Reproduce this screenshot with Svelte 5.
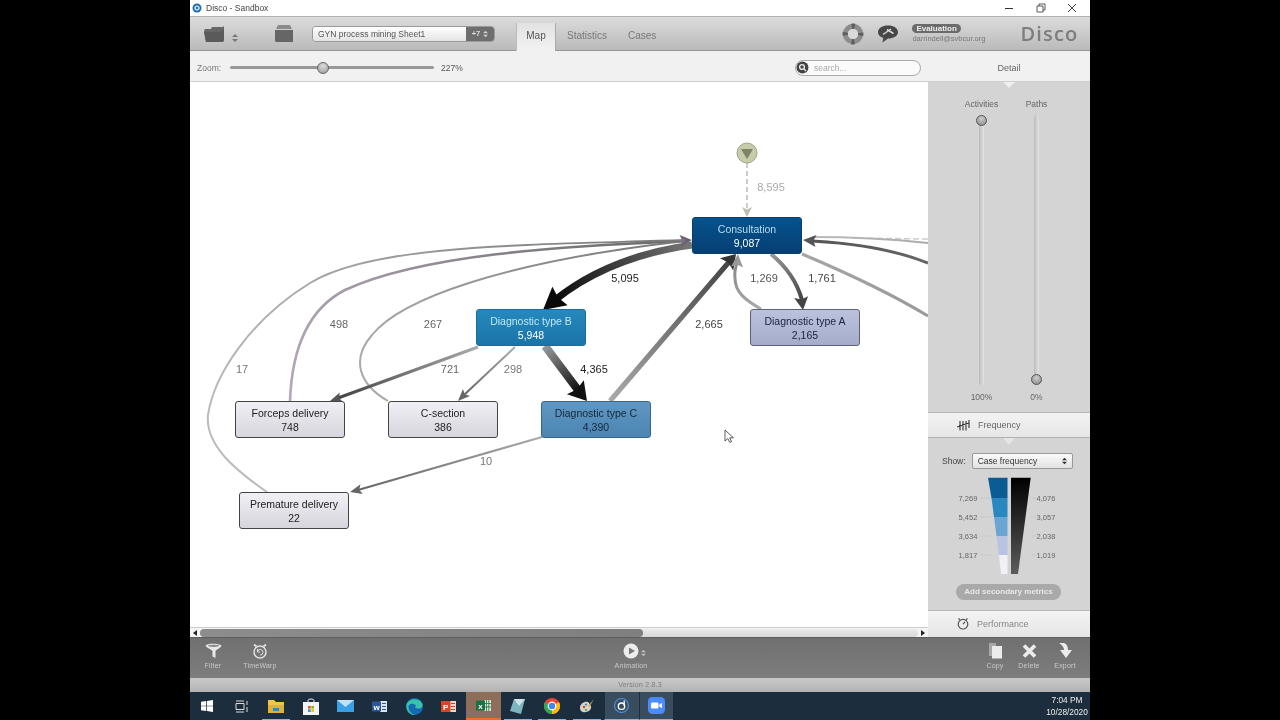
<script>
  const nodes = [
    { name: 'Consultation', count: '9,087', x: 692, y: 217, kind: 'n1' },
    { name: 'Diagnostic type B', count: '5,948', x: 476, y: 309, kind: 'n2' },
    { name: 'Diagnostic type A', count: '2,165', x: 750, y: 309, kind: 'n4' },
    { name: 'Diagnostic type C', count: '4,390', x: 541, y: 401, kind: 'n3' },
    { name: 'Forceps delivery', count: '748', x: 235, y: 401, kind: 'n5' },
    { name: 'C-section', count: '386', x: 388, y: 401, kind: 'n5' },
    { name: 'Premature delivery', count: '22', x: 239, y: 492, kind: 'n5' }
  ];

  // a = colour at source, b = colour at target, back = point the arrow head points away from
  const edges = [
    { d: 'M928 239 L853 238', w: 1.5, a: '#ccc', b: '#ccc', dash: '6 3' },
    { d: 'M928 243 C890 239 850 237 812 237', w: 2, a: '#aaa', b: '#bbb' },
    { d: 'M928 263 C890 248 850 243 812 241', w: 3, a: '#666', b: '#555', tip: [803, 240], back: [815, 241], hs: 13, hw: 6 },
    { d: 'M802 254 C840 270 885 290 928 316', w: 3, a: '#a5a5a5', b: '#999' },
    { d: 'M692 245 C635 253 590 272 555 300', w: 7, a: '#777', b: '#0a0a0a', tip: [543, 310], back: [560, 296], hs: 22, hw: 12, hc: '#0a0a0a' },
    { d: 'M545 346 L578 390', w: 8, a: '#999', b: '#111', tip: [587, 401], back: [576, 388], hs: 18, hw: 11, hc: '#111' },
    { d: 'M610 401 L729 262', w: 5, a: '#aaa', b: '#444', tip: [736, 254], back: [726, 265], hs: 14, hw: 9, hc: '#333' },
    { d: 'M761 309 C745 300 735 292 735 278 C734 270 736 266 738 260', w: 3, a: '#aaa', b: '#888', tip: [738, 254], back: [737, 268], hs: 13, hw: 6, hc: '#999' },
    { d: 'M771 254 C788 268 797 282 802 300', w: 4, a: '#999', b: '#444', tip: [803, 310], back: [801, 296], hs: 13, hw: 7, hc: '#444' },
    { d: 'M290 401 C292 345 310 308 345 290 C420 255 560 246 685 241', w: 2.6, a: '#b3a8b8', b: '#666', tip: [692, 240], back: [680, 241], hs: 12, hw: 6, hc: '#6d5f74' },
    { d: 'M388 401 C360 385 350 360 372 335 C400 300 500 262 685 241', w: 2, a: '#aaa', b: '#777' },
    { d: 'M267 492 C235 470 205 445 208 415 C214 375 250 320 310 283 C375 243 540 245 685 240', w: 2, a: '#bbb', b: '#777' },
    { d: 'M478 347 L338 398', w: 3, a: '#aaa', b: '#444', tip: [330, 401], back: [342, 397], hs: 12, hw: 5, hc: '#555' },
    { d: 'M515 347 L464 395', w: 2, a: '#aaa', b: '#666', tip: [458, 401], back: [467, 392], hs: 12, hw: 5, hc: '#666' },
    { d: 'M542 437 L358 490', w: 2, a: '#aaa', b: '#666', tip: [350, 492], back: [362, 489], hs: 12, hw: 5, hc: '#666' },
    { d: 'M747 163 L747 208', w: 1.5, a: '#bbb', b: '#bbb', dash: '5 3', tip: [747, 217], back: [747, 208], hs: 10, hw: 5, hc: '#bdbfae' }
  ];

  const labels = [
    { t: '8,595', x: 771, y: 187, c: '#aaa' },
    { t: '5,095', x: 625, y: 278, c: '#222' },
    { t: '1,269', x: 764, y: 278, c: '#555' },
    { t: '1,761', x: 822, y: 278, c: '#444' },
    { t: '2,665', x: 709, y: 324, c: '#444' },
    { t: '498', x: 339, y: 324, c: '#666' },
    { t: '267', x: 433, y: 324, c: '#666' },
    { t: '721', x: 450, y: 369, c: '#666' },
    { t: '298', x: 513, y: 369, c: '#777' },
    { t: '4,365', x: 594, y: 369, c: '#222' },
    { t: '17', x: 242, y: 369, c: '#777' },
    { t: '10', x: 486, y: 461, c: '#777' }
  ];

  function head(e) {
    const dx = e.tip[0] - e.back[0];
    const dy = e.tip[1] - e.back[1];
    const l = Math.hypot(dx, dy);
    const ux = dx / l;
    const uy = dy / l;
    const bx = e.tip[0] - ux * e.hs;
    const by = e.tip[1] - uy * e.hs;
    return [
      `${e.tip[0]},${e.tip[1]}`,
      `${bx - uy * e.hw},${by + ux * e.hw}`,
      `${bx + ux * 2.5},${by + uy * 2.5}`,
      `${bx + uy * e.hw},${by - ux * e.hw}`
    ].join(' ');
  }

  function ends(e) {
    const n = e.d.match(/-?\d+(\.\d+)?/g).map(Number);
    return { x1: n[0], y1: n[1], x2: n[n.length - 2], y2: n[n.length - 1] };
  }

  const legendLeft = [['7,269', 128], ['5,452', 147], ['3,634', 166], ['1,817', 185]];
  const legendRight = [['4,076', 128], ['3,057', 147], ['2,038', 166], ['1,019', 185]];
</script>

<div class="screen">
  <div class="titlebar">
    <svg class="appicon" width="10" height="10" viewBox="0 0 10 10">
      <circle cx="5" cy="5" r="4.5" fill="#1f6fb5" />
      <circle cx="5" cy="5" r="2" fill="none" stroke="#fff" stroke-width="1.2" />
    </svg>
    <span class="apptitle">Disco - Sandbox</span>
    <div class="winbtns">
      <svg width="10" height="10" viewBox="0 0 10 10"><path d="M0 5.5H8" stroke="#333" /></svg>
      <svg width="10" height="10" viewBox="0 0 10 10" fill="none" stroke="#333" stroke-width="0.8"><path d="M1 3H7V9H1Z M3 3V1H9V7H7" /></svg>
      <svg width="10" height="10" viewBox="0 0 10 10" fill="none" stroke="#333" stroke-width="0.9"><path d="M1 1L9 9M9 1L1 9" /></svg>
    </div>
  </div>

  <div class="toolbar">
    <svg class="folder" width="21" height="18" viewBox="0 0 21 18">
      <path d="M1 4H7L8 2H19L20 1V15L19 17H2L0 6Z" fill="#666" />
      <path d="M0 7H16L20 4V15L19 17H2Z" fill="#5a5a5a" />
    </svg>
    <svg class="updown" width="6" height="8" viewBox="0 0 6 8"><path d="M3 0L6 3H0ZM3 8L0 5H6Z" fill="#777" /></svg>
    <svg class="archive" width="18" height="18" viewBox="0 0 18 18">
      <path d="M3 0H15L17 4H1Z" fill="#8a8a8a" />
      <path d="M0 5H18V17H1L0 16Z" fill="#666" />
    </svg>
    <div class="dataset">
      <span class="dataset-name">GYN process mining Sheet1</span>
      <span class="dataset-more">+7
        <svg width="5" height="8" viewBox="0 0 6 8"><path d="M3 0L6 3H0ZM3 8L0 5H6Z" fill="#ccc" /></svg>
      </span>
    </div>
    <div class="tabs">
      <span class="tab active">Map</span>
      <span class="tab stat">Statistics</span>
      <span class="tab cases">Cases</span>
    </div>
    <svg class="buoy" width="22" height="22" viewBox="0 0 22 22">
      <circle cx="11" cy="11" r="7.7" fill="none" stroke="#8c8c8c" stroke-width="5" />
      <circle cx="11" cy="11" r="7.7" fill="none" stroke="#5e5e5e" stroke-width="5.4" stroke-dasharray="3 9.1" stroke-dashoffset="1.5" />
      <circle cx="11" cy="11" r="5" fill="#dadada" />
    </svg>
    <svg class="chat" width="20" height="18" viewBox="0 0 20 18">
      <path d="M10 0.5C15.5 0.5 20 3 20 7.2C20 11 15.5 13.5 10 13.5L4.5 17.5L5.2 12.8C2 11.8 0 9.8 0 7.2C0 3 4.5 0.5 10 0.5Z" fill="#474747" />
      <path d="M5 9.5L13 4M9 4.5L15.5 8.5" stroke="#d8d8d8" stroke-width="1.5" fill="none" />
    </svg>
    <div class="account">
      <span class="badge">Evaluation</span>
      <span class="mail">darrindell@svbcur.org</span>
    </div>
    <span class="logo">Disco</span>
  </div>

  <div class="subbar">
    <span class="zoomlabel">Zoom:</span>
    <div class="zoomtrack"><span class="zoomknob"></span></div>
    <span class="zoomvalue">227%</span>
    <div class="search">
      <svg width="13" height="13" viewBox="0 0 13 13">
        <circle cx="6.5" cy="6.5" r="6" fill="#444" />
        <circle cx="6" cy="6" r="2.4" fill="none" stroke="#eee" stroke-width="1.3" />
        <path d="M8 8L10 10" stroke="#eee" stroke-width="1.3" />
      </svg>
      <span>search...</span>
    </div>
    <div class="detailtab">Detail</div>
  </div>

  <div class="main">
    <div class="canvas">
      <svg class="edges" width="738" height="545" viewBox="190 82 738 545">
        <defs>
          {#each edges as e, i}
            {@const p = ends(e)}
            <linearGradient id="edge{i}" gradientUnits="userSpaceOnUse" x1={p.x1} y1={p.y1} x2={p.x2} y2={p.y2 + 0.01}>
              <stop offset="0" stop-color={e.a} />
              <stop offset="1" stop-color={e.b} />
            </linearGradient>
          {/each}
        </defs>
        {#each edges as e, i}
          <path d={e.d} fill="none" stroke="url(#edge{i})" stroke-width={e.w} stroke-dasharray={e.dash} />
          {#if e.tip}
            <polygon points={head(e)} fill={e.hc || e.b} />
          {/if}
        {/each}
        <circle cx="747" cy="153" r="10" fill="#c6cbaa" stroke="#a2a58f" />
        <path d="M741 149H753L747 159Z" fill="#7d8367" />
      </svg>

      {#each labels as l}
        <span class="edgelabel" style="left:{l.x - 190}px;top:{l.y - 82}px;color:{l.c}">{l.t}</span>
      {/each}

      {#each nodes as n}
        <div class="node {n.kind}" style="left:{n.x - 190}px;top:{n.y - 82}px">
          <span class="node-name">{n.name}</span>
          <span class="node-count">{n.count}</span>
        </div>
      {/each}

      <svg class="cursor" width="11" height="15" viewBox="0 0 11 15">
        <path d="M1 1V12L3.8 9.5L5.8 13.5L7.6 12.6L5.7 8.8H9.4Z" fill="#fff" stroke="#333" stroke-width="0.8" />
      </svg>

      <div class="scrollbar">
        <span class="arrow-l"></span>
        <div class="scrolltrack"><div class="scrollthumb"></div></div>
        <span class="arrow-r"></span>
      </div>
    </div>

    <aside class="side">
      <div class="sliders">
        <div class="slidercol">
          <span class="slabel">Activities</span>
          <div class="vtrack"><span class="vknob top"></span></div>
          <span class="slabel pct">100%</span>
        </div>
        <div class="slidercol">
          <span class="slabel">Paths</span>
          <div class="vtrack"><span class="vknob bottom"></span></div>
          <span class="slabel pct">0%</span>
        </div>
      </div>

      <div class="band freq">
        <svg width="13" height="11" viewBox="0 0 13 11" stroke="#333" stroke-width="1.1" fill="none">
          <path d="M3 1V10.5M6 1V10.5M9 1V10.5M12 0V8M0 7L12 3" />
        </svg>
        <span>Frequency</span>
      </div>
      <div class="freqbody">
        <div class="showrow">
          <span>Show:</span>
          <div class="select">
            <span>Case frequency</span>
            <svg width="5" height="8" viewBox="0 0 6 8"><path d="M3 0L6 3H0ZM3 8L0 5H6Z" fill="#333" /></svg>
          </div>
        </div>
        <svg class="legend" width="162" height="104" viewBox="0 100 162 104">
          <defs>
            <linearGradient id="blackfun" x1="0" y1="0" x2="0" y2="1">
              <stop offset="0" stop-color="#000" />
              <stop offset="1" stop-color="#5c5c5c" />
            </linearGradient>
          </defs>
          <g stroke="#c0c0c0" stroke-width="0.6">
            {#each legendLeft as row}
              <line x1="52" x2="64" y1={row[1]} y2={row[1]} />
            {/each}
            {#each legendRight as row}
              <line x1="103" x2="108" y1={row[1]} y2={row[1]} />
            {/each}
          </g>
          <polygon points="60,107.7 79.5,107.7 79.5,128 63.5,128" fill="#0b5b95" />
          <polygon points="63.5,128 79.5,128 79.5,147 66,147" fill="#2a88c0" />
          <polygon points="66,147 79.5,147 79.5,166 68.5,166" fill="#6ba5d3" />
          <polygon points="68.5,166 79.5,166 79.5,185 71,185" fill="#b9c3e3" />
          <polygon points="71,185 79.5,185 79.5,204 73,204" fill="#f1f1f5" />
          <polygon points="83,107.7 102.7,107.7 90,204 83,204" fill="url(#blackfun)" />
          {#each legendLeft as row}
            <text class="tick" x="40" y={row[1] + 3} text-anchor="middle">{row[0]}</text>
          {/each}
          {#each legendRight as row}
            <text class="tick" x="118" y={row[1] + 3} text-anchor="middle">{row[0]}</text>
          {/each}
        </svg>
        <div class="addmetrics">Add secondary metrics</div>
      </div>
      <div class="band perf">
        <svg width="12" height="13" viewBox="0 0 12 13" fill="none" stroke="#555" stroke-width="1.2">
          <circle cx="6" cy="7.2" r="4.8" />
          <path d="M6 7.2L8 5M1.5 1.5L3 2.8M10.5 1.5L9 2.8" />
        </svg>
        <span>Performance</span>
      </div>
    </aside>
  </div>

  <div class="bottombar">
    <div class="tool filter">
      <svg width="17" height="16" viewBox="0 0 17 16">
        <path d="M0.5 2.5C2 0.5 13 0 16.5 2.5C16 5 12 6 10.5 8V15L7.5 13.5V8C6 6 1.5 5 0.5 2.5Z" fill="#e8e8e8" />
        <ellipse cx="8.5" cy="2.8" rx="5.5" ry="1.1" fill="#8a8a8a" />
      </svg>
      <span>Filter</span>
    </div>
    <div class="tool warp">
      <svg width="16" height="16" viewBox="0 0 16 16" fill="none" stroke="#e0e0e0" stroke-width="1.5">
        <circle cx="8" cy="9" r="6" />
        <path d="M5.5 8.5A2.8 2.8 0 1 1 8 12M5.5 6V9H8" stroke-width="1" />
        <path d="M2 1.5L4.5 3.5M14 1.5L11.5 3.5" stroke-width="1.8" />
      </svg>
      <span>TimeWarp</span>
    </div>
    <div class="tool anim">
      <div class="animicon">
        <svg width="16" height="16" viewBox="0 0 16 16">
          <circle cx="8" cy="8" r="7.5" fill="#ececec" />
          <path d="M6 4.5L12 8L6 11.5Z" fill="#777" />
        </svg>
        <svg class="animarrows" width="5" height="8" viewBox="0 0 6 8"><path d="M3 0L6 3H0ZM3 8L0 5H6Z" fill="#bbb" /></svg>
      </div>
      <span>Animation</span>
    </div>
    <div class="tool copy">
      <svg width="15" height="16" viewBox="0 0 15 16">
        <path d="M1 0H8V3H4V13H1Z" fill="#a8a8a8" />
        <path d="M4 3H14V15.5H4Z" fill="#ececec" />
      </svg>
      <span>Copy</span>
    </div>
    <div class="tool del">
      <svg width="15" height="15" viewBox="0 0 15 15"><path d="M2 2L13 13M13 2L2 13" stroke="#ececec" stroke-width="3.6" /></svg>
      <span>Delete</span>
    </div>
    <div class="tool exp">
      <svg width="15" height="16" viewBox="0 0 15 16"><path d="M1 0H6C9 1 10 4 10 7H14L8 15L2 7H6C6 4 4 2 1 0Z" fill="#ececec" /></svg>
      <span>Export</span>
    </div>
  </div>
  <div class="versionbar">Version 2.8.3</div>

  <div class="taskbar">
    <div class="cell">
      <svg width="12" height="12" viewBox="0 0 13 13" fill="#fff"><path d="M0 2L5.7 1.2V6.1H0ZM6.5 1L13 0V6.1H6.5ZM0 6.9H5.7V11.8L0 11ZM6.5 6.9H13V13L6.5 12Z" /></svg>
    </div>
    <div class="cell">
      <svg width="13" height="13" viewBox="0 0 13 13" fill="none" stroke="#ddd"><path d="M1 3.5H9V9.5H1ZM1 1H9M1 12H9M12 1V5M12 7V12" /></svg>
    </div>
    <div class="cell on">
      <svg width="16" height="13" viewBox="0 0 16 13"><path d="M0 0H6L8 2H16V13H0Z" fill="#f3c54e" /><path d="M0 5H16V13H0Z" fill="#e8ae2d" /><path d="M5 8H11V11H5Z" fill="#2f88c5" /></svg>
    </div>
    <div class="cell">
      <svg width="16" height="17" viewBox="0 0 16 17">
        <path d="M5 5V2.5C5 0.5 11 0.5 11 2.5V5" fill="none" stroke="#eee" />
        <path d="M0 4H16V17H0Z" fill="#f4f4f4" />
        <path d="M5 8H7.7V10.6H5Z" fill="#e8542a" /><path d="M8.3 8H11V10.6H8.3Z" fill="#7fba00" /><path d="M5 11.2H7.7V14H5Z" fill="#2a9be0" /><path d="M8.3 11.2H11V14H8.3Z" fill="#fbbc05" />
      </svg>
    </div>
    <div class="cell">
      <svg width="17" height="12" viewBox="0 0 17 12"><path d="M0 0H17V12H0Z" fill="#3aa0e4" /><path d="M0 0L8.5 7L17 0Z" fill="#bfe2f8" /></svg>
    </div>
    <div class="cell">
      <svg width="15" height="13" viewBox="0 0 15 13">
        <path d="M8 1H15V12H8Z" fill="#dfe6f2" /><path d="M10 3.5H14M10 6.5H14M10 9.5H14" stroke="#2b579a" />
        <rect x="0" y="1.5" width="9" height="10" fill="#2b579a" />
        <text class="appletter" x="4.5" y="9.5" text-anchor="middle">w</text>
      </svg>
    </div>
    <div class="cell">
      <svg width="17" height="17" viewBox="0 0 17 17">
        <circle cx="8.5" cy="8.5" r="8.5" fill="#1668b5" />
        <path d="M0.5 6C3 0.5 13 -1 16.5 6C17.5 11 11 11.5 9 9.5C12 6.5 6 4 3 7C1.5 9 3 15 9 17C4 17 -0.5 13 0.5 6Z" fill="#37c4a8" />
      </svg>
    </div>
    <div class="cell">
      <svg width="15" height="13" viewBox="0 0 15 13">
        <path d="M8 1H15V12H8Z" fill="#f3d7cf" /><path d="M10 3.5H14M10 6.5H14M10 9.5H14" stroke="#c9431f" />
        <rect x="0" y="1" width="9.5" height="11" fill="#d24726" />
        <text class="appletter" x="4.7" y="9.5" text-anchor="middle">P</text>
      </svg>
    </div>
    <div class="cell excel">
      <svg width="15" height="13" viewBox="0 0 15 13">
        <path d="M8 1H15V12H8Z" fill="#d7ead9" /><path d="M10.5 1V12M12.8 1V12M8 4.5H15M8 8H15" stroke="#1d7044" stroke-width="0.8" />
        <rect x="0" y="1.5" width="9" height="10" fill="#1d7044" />
        <text class="appletter" x="4.5" y="9.5" text-anchor="middle">x</text>
      </svg>
    </div>
    <div class="cell on">
      <svg width="15" height="15" viewBox="0 0 15 15">
        <path d="M4 0H15L11 15L0 12Z" fill="#7fb6bd" /><path d="M4 0H15L9 7Z" fill="#cfe3e6" />
      </svg>
    </div>
    <div class="cell on">
      <svg width="16" height="16" viewBox="0 0 16 16">
        <circle cx="8" cy="8" r="8" fill="#ea4335" />
        <path d="M8 8L1 4A8 8 0 0 0 8 16Z" fill="#34a853" />
        <path d="M8 8L8 16A8 8 0 0 0 15 4Z" fill="#fbbc05" />
        <circle cx="8" cy="8" r="3.8" fill="#4285f4" stroke="#fff" stroke-width="1.2" />
      </svg>
    </div>
    <div class="cell on">
      <svg width="16" height="16" viewBox="0 0 16 16">
        <path d="M1 10C1 5 6 3 9 4C11 5 10 7 12 8C13 12 8 15 4 14C2 13.5 1 12 1 10Z" fill="#d9d3c4" />
        <circle cx="5" cy="9" r="1.2" fill="#d24726" /><circle cx="7" cy="6.5" r="1.1" fill="#2a7de1" /><circle cx="7" cy="12" r="1.1" fill="#3aa655" />
        <path d="M15 1L9 8L10 9.5Z" fill="#e0b04a" />
      </svg>
    </div>
    <div class="cell open">
      <svg width="15" height="15" viewBox="0 0 15 15">
        <circle cx="7.5" cy="7.5" r="7" fill="none" stroke="#4a90d9" stroke-width="1.1" />
        <circle cx="7.5" cy="8.2" r="3.2" fill="none" stroke="#fff" stroke-width="1.3" />
        <path d="M10.2 2.5V8" stroke="#fff" stroke-width="1.3" />
      </svg>
    </div>
    <div class="cell open">
      <svg width="17" height="17" viewBox="0 0 17 17">
        <rect width="17" height="17" rx="4.5" fill="#4a8cff" />
        <rect x="3" y="5.5" width="7.5" height="6" rx="1.2" fill="#fff" />
        <path d="M11 8L14 5.8V11.2L11 9Z" fill="#fff" />
      </svg>
    </div>
    <div class="clock">
      <span>7:04 PM</span>
      <span>10/28/2020</span>
    </div>
  </div>
</div>

<style>
  :global(body) {
    margin: 0;
    background: #000;
  }
  .screen {
    width: 900px;
    height: 720px;
    margin: 0 auto;
    display: flex;
    flex-direction: column;
    font-family: "Liberation Sans", Arial, sans-serif;
    background: #fff;
    overflow: hidden;
    filter: blur(0.35px);
  }

  .titlebar {
    height: 16px;
    display: flex;
    align-items: center;
    padding-left: 2px;
    background: #fff;
    font-size: 8.5px;
    color: #444;
  }
  .apptitle {
    margin-left: 4px;
  }
  .winbtns {
    margin-left: auto;
    display: flex;
    gap: 21px;
    padding-right: 13px;
  }

  .toolbar {
    height: 35px;
    box-sizing: border-box;
    display: flex;
    align-items: center;
    position: relative;
    background: linear-gradient(#dcdcdc, #bababa);
    border-top: 1px solid #b0b0b0;
    border-bottom: 1px solid #989898;
  }
  .folder {
    margin-left: 14px;
  }
  .updown {
    margin: 8px 0 0 7px;
  }
  .archive {
    margin-left: 37px;
  }
  .dataset {
    margin-left: 19px;
    width: 183px;
    height: 16px;
    box-sizing: border-box;
    display: flex;
    border: 1px solid #9a9a9a;
    border-radius: 4px;
    overflow: hidden;
    font-size: 8.5px;
    color: #555;
  }
  .dataset-name {
    flex: 1;
    padding-left: 5px;
    line-height: 14px;
    background: linear-gradient(#fff, #e4e4e4);
  }
  .dataset-more {
    width: 28px;
    display: flex;
    align-items: center;
    justify-content: center;
    gap: 3px;
    background: #6e6e6e;
    color: #ddd;
    font-size: 7.5px;
    font-weight: bold;
  }
  .tabs {
    margin-left: 21px;
    align-self: stretch;
    display: flex;
    font-size: 10px;
    color: #777;
  }
  .tab {
    line-height: 37px;
  }
  .tab.active {
    width: 40px;
    margin-top: 6px;
    line-height: 25px;
    text-align: center;
    color: #555;
    background: linear-gradient(#e2e2e2, #f2f2f2);
    border-left: 1px solid #bbb;
    border-right: 1px solid #aaa;
    margin-bottom: -1px;
    box-sizing: border-box;
  }
  .tab.stat {
    margin-left: 11px;
  }
  .tab.cases {
    margin-left: 21px;
  }
  .buoy {
    margin-left: 186px;
  }
  .chat {
    margin-left: 14px;
  }
  .account {
    margin-left: 14px;
    width: 84px;
    display: flex;
    flex-direction: column;
    align-items: flex-start;
    gap: 1px;
  }
  .badge {
    background: #6b6b6b;
    color: #eee;
    font-size: 8px;
    font-weight: bold;
    line-height: 9px;
    padding: 0 4px;
    border-radius: 5px;
  }
  .mail {
    font-size: 7.5px;
    color: #777;
  }
  .logo {
    margin-left: 24px;
    font-family: "Open Sans", sans-serif;
    font-size: 20px;
    font-weight: 600;
    letter-spacing: 1.2px;
    color: #7d7d7d;
  }

  .subbar {
    height: 31px;
    box-sizing: border-box;
    padding-top: 3px;
    display: flex;
    align-items: center;
    background: #f1f1f1;
    border-bottom: 1px solid #cfcfcf;
    font-size: 8.5px;
    color: #777;
  }
  .zoomlabel {
    margin-left: 7px;
    width: 33px;
  }
  .zoomtrack {
    width: 204px;
    height: 3px;
    background: #999;
    border-radius: 2px;
    position: relative;
  }
  .zoomknob {
    position: absolute;
    left: 87px;
    top: -4px;
    width: 10px;
    height: 10px;
    border-radius: 50%;
    border: 1px solid #666;
    background: radial-gradient(circle at 50% 30%, #ddd, #999);
  }
  .zoomvalue {
    margin-left: 7px;
    width: 354px;
    color: #555;
  }
  .search {
    width: 126px;
    height: 16px;
    box-sizing: border-box;
    display: flex;
    align-items: center;
    gap: 5px;
    padding-left: 0;
    background: #fbfbfb;
    border: 1px solid #aaa;
    border-radius: 8px;
    color: #aaa;
  }
  .detailtab {
    margin-left: auto;
    width: 162px;
    text-align: center;
    color: #666;
    font-size: 9px;
  }

  .main {
    height: 555px;
    display: flex;
  }
  .canvas {
    width: 738px;
    position: relative;
    background: #fff;
  }
  .edges {
    position: absolute;
    left: 0;
    top: 0;
  }
  .edgelabel {
    position: absolute;
    transform: translate(-50%, -50%);
    font-size: 11px;
  }
  .node {
    position: absolute;
    width: 110px;
    height: 37px;
    box-sizing: border-box;
    padding-top: 1px;
    border: 1px solid #444;
    border-radius: 3px;
    display: flex;
    flex-direction: column;
    align-items: center;
    justify-content: center;
    font-size: 10.5px;
    line-height: 14.5px;
    color: #222;
  }
  .n1 {
    background: linear-gradient(#05528c, #063f74);
    border-color: #0a3e6c;
    color: #fff;
  }
  .n1 .node-name {
    color: #b5dcf7;
  }
  .n2 {
    background: linear-gradient(#2689bd, #1a74a8);
    border-color: #1b6c9c;
    color: #fff;
  }
  .n2 .node-name {
    color: #c0e6f8;
  }
  .n3 {
    background: linear-gradient(#6097c2, #4b85b2);
    border-color: #35688f;
    color: #14263b;
  }
  .n4 {
    background: linear-gradient(#bcc2dd, #a5accb);
    border-color: #5c6178;
    color: #18233d;
  }
  .n5 {
    background: linear-gradient(#f1f0f5, #d7d5dd);
  }
  .cursor {
    position: absolute;
    left: 534px;
    top: 347px;
  }
  .scrollbar {
    position: absolute;
    left: 0;
    right: 0;
    bottom: 0;
    height: 10px;
    display: flex;
    align-items: center;
    background: #f4f4f4;
    border-top: 1px solid #ccc;
    box-sizing: border-box;
  }
  .arrow-l,
  .arrow-r {
    width: 0;
    height: 0;
    border-top: 3px solid transparent;
    border-bottom: 3px solid transparent;
  }
  .arrow-l {
    margin-left: 3px;
    border-right: 4px solid #222;
  }
  .arrow-r {
    margin-right: 3px;
    border-left: 4px solid #222;
  }
  .scrolltrack {
    flex: 1;
    height: 8px;
    margin: 0 3px;
    background: linear-gradient(#e9e9e9, #d8d8d8);
    border-radius: 4px;
  }
  .scrollthumb {
    width: 443px;
    height: 8px;
    border-radius: 4px;
    background: linear-gradient(90deg, #8d8d8d, #7f7f7f);
  }

  .side {
    width: 162px;
    display: flex;
    flex-direction: column;
    background: #d4d4d4;
    position: relative;
  }
  .side::before {
    content: "";
    position: absolute;
    left: 75px;
    top: 0;
    border-left: 6px solid transparent;
    border-right: 6px solid transparent;
    border-top: 6px solid #efefef;
  }
  .sliders {
    height: 330px;
    box-sizing: border-box;
    padding: 17px 0 0 26px;
    display: flex;
  }
  .slidercol {
    width: 55px;
    display: flex;
    flex-direction: column;
    align-items: center;
  }
  .slabel {
    font-size: 8.5px;
    line-height: 10px;
    color: #666;
  }
  .pct {
    margin-top: 7px;
  }
  .vtrack {
    margin-top: 6px;
    width: 5px;
    height: 270px;
    background: linear-gradient(90deg, #bbb, #e3e3e3);
    border-radius: 3px;
    position: relative;
  }
  .vknob {
    position: absolute;
    left: -3px;
    width: 9px;
    height: 9px;
    border-radius: 50%;
    border: 1px solid #555;
    background: radial-gradient(circle at 50% 30%, #ccc, #888);
  }
  .vknob.top {
    top: 0;
  }
  .vknob.bottom {
    bottom: 0;
  }
  .band {
    height: 26px;
    box-sizing: border-box;
    display: flex;
    align-items: center;
    gap: 8px;
    padding-left: 29px;
    font-size: 9px;
    color: #666;
    background: linear-gradient(#f3f3f3, #e6e6e6);
    border-top: 1px solid #b5b5b5;
    border-bottom: 1px solid #b0b0b0;
  }
  .freq {
    position: relative;
  }
  .freq::after {
    content: "";
    position: absolute;
    left: 75px;
    top: 25px;
    border-left: 6px solid transparent;
    border-right: 6px solid transparent;
    border-top: 7px solid #e6e6e6;
  }
  .perf {
    height: 27px;
    padding-bottom: 1px;
    color: #888;
    border-bottom: 0;
  }
  .freqbody {
    height: 172px;
    box-sizing: border-box;
    padding-top: 15px;
    display: flex;
    flex-direction: column;
  }
  .showrow {
    display: flex;
    align-items: center;
    gap: 6px;
    padding-left: 14px;
    margin-bottom: 1px;
    font-size: 8.5px;
    color: #444;
  }
  .select {
    width: 101px;
    height: 16px;
    box-sizing: border-box;
    display: flex;
    align-items: center;
    justify-content: space-between;
    padding: 0 5px;
    background: linear-gradient(#fafafa, #e2e2e2);
    border: 1px solid #999;
    border-radius: 2px;
    color: #333;
  }
  .legend {
    display: block;
  }
  .tick {
    font-size: 7.5px;
    fill: #666;
  }
  .addmetrics {
    width: 105px;
    height: 16px;
    margin: 10px 0 0 28px;
    text-align: center;
    line-height: 16px;
    border-radius: 8px;
    background: #a9a9a9;
    color: #e8e8e8;
    font-size: 8px;
    font-weight: bold;
  }

  .bottombar {
    height: 41px;
    position: relative;
    display: flex;
    background: linear-gradient(#707070, #7d7d7d);
    border-top: 1px solid #5e5e5e;
    box-sizing: border-box;
  }
  .tool {
    position: relative;
    display: flex;
    flex-direction: column;
    align-items: center;
    gap: 3px;
    padding-top: 5px;
    width: 44px;
    flex: none;
    font-size: 7px;
    letter-spacing: 0.2px;
    color: #c9c9c9;
  }
  .tool svg {
    height: 16px;
  }
  .filter {
    margin-left: 1px;
  }
  .warp {
    margin-left: 3px;
  }
  .anim {
    margin-left: 327px;
  }
  .animicon {
    display: flex;
    align-items: center;
    gap: 2px;
    margin-left: 7px;
  }
  .animicon .animarrows {
    height: 8px;
    margin-top: 4px;
  }
  .copy {
    margin-left: 320px;
  }
  .del {
    margin-left: -10px;
  }
  .exp {
    margin-left: -8px;
  }
  .versionbar {
    height: 14px;
    text-align: center;
    line-height: 14px;
    font-size: 7px;
    letter-spacing: 0.2px;
    padding-left: 0;
    color: #7e7e7e;
    background: linear-gradient(#c9c9c9, #b3b3b3);
  }

  .taskbar {
    height: 28px;
    display: flex;
    background: #1c2d3d;
  }
  .cell {
    width: 34.5px;
    height: 28px;
    flex: none;
    box-sizing: border-box;
    display: flex;
    align-items: center;
    justify-content: center;
  }
  .cell.on {
    background: linear-gradient(#76b9ed, #76b9ed) center bottom / 28px 1px no-repeat;
  }
  .cell.excel {
    background: #8e6e5b;
    border-bottom: 2px solid #e8702a;
  }
  .cell.open {
    background: #3a4d5f;
    border-bottom: 1px solid #76b9ed;
    border-left: 1px solid #1c2d3d;
  }
  .appletter {
    font-size: 8px;
    font-weight: bold;
    fill: #fff;
  }
  .clock {
    margin-left: auto;
    width: 44px;
    padding-right: 1px;
    display: flex;
    flex-direction: column;
    align-items: center;
    justify-content: center;
    gap: 3px;
    font-size: 8.3px;
    line-height: 9px;
    color: #eee;
  }
</style>
